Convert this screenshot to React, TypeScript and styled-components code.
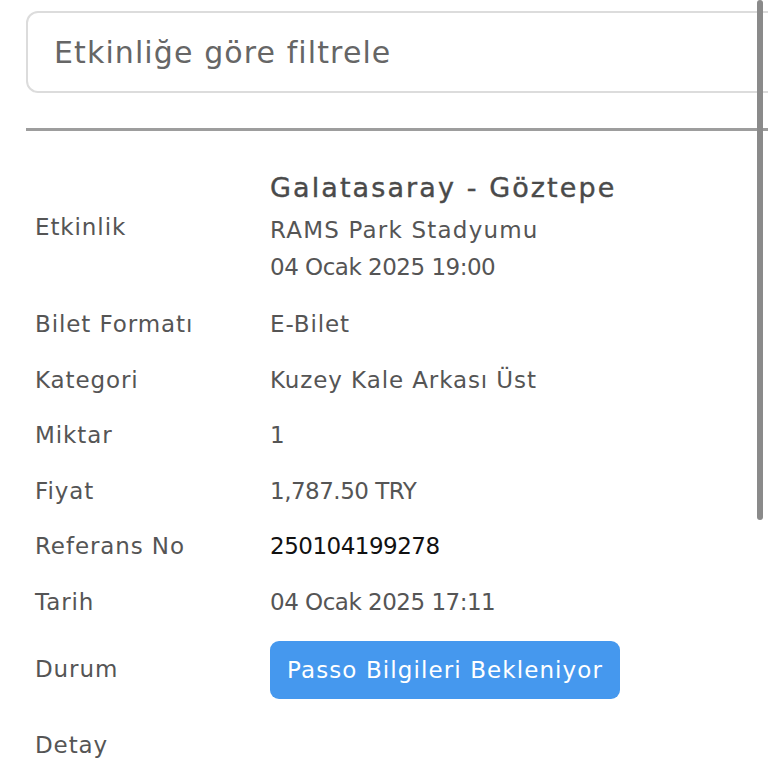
import styled, { createGlobalStyle } from 'styled-components';

const GlobalStyle = createGlobalStyle`
  html, body {
    margin: 0;
    padding: 0;
    background: #ffffff;
  }
  body {
    font-family: "DejaVu Sans", "Open Sans", sans-serif;
    overflow: hidden;
  }
`;

type Row = { label: string; value: string; strong?: boolean; numeric?: boolean };

const rows: Row[] = [
  { label: 'Bilet Formatı', value: 'E-Bilet' },
  { label: 'Kategori', value: 'Kuzey Kale Arkası Üst' },
  { label: 'Miktar', value: '1', numeric: true },
  { label: 'Fiyat', value: '1,787.50 TRY', numeric: true },
  { label: 'Referans No', value: '250104199278', strong: true, numeric: true },
  { label: 'Tarih', value: '04 Ocak 2025 17:11', numeric: true },
];

const App = () => {
  return (
    <Page>
      <GlobalStyle />
      <FilterInput placeholder="Etkinliğe göre filtrele" />
      <Divider />
      <Details>
        <tbody>
          <tr>
            <Label>Etkinlik</Label>
            <Value>
              <EventTitle>Galatasaray - Göztepe</EventTitle>
              <EventLine>RAMS Park Stadyumu</EventLine>
              <EventLine $numeric>04 Ocak 2025 19:00</EventLine>
            </Value>
          </tr>
          {rows.map((r) => (
            <tr key={r.label}>
              <Label>{r.label}</Label>
              <Value $strong={r.strong} $numeric={r.numeric}>{r.value}</Value>
            </tr>
          ))}
          <tr>
            <Label $tall>Durum</Label>
            <Value $tall>
              <StatusBadge>Passo Bilgileri Bekleniyor</StatusBadge>
            </Value>
          </tr>
          <tr>
            <Label $last>Detay</Label>
            <Value $last />
          </tr>
        </tbody>
      </Details>
      <ScrollThumb />
    </Page>
  );
};

export default App;

const Page = styled.div`
  position: relative;
  width: 768px;
  height: 768px;
  overflow: hidden;
  padding: 11px 0 0 26px;
  box-sizing: border-box;
`;

const FilterInput = styled.input`
  display: block;
  width: 780px;
  height: 82px;
  box-sizing: border-box;
  border: 2px solid #dcdcdc;
  border-radius: 12px;
  padding: 0 26px;
  font-family: "DejaVu Sans", "Open Sans", sans-serif;
  font-size: 30px;
  letter-spacing: 1.1px;
  color: #555;
  outline: none;

  &::placeholder {
    color: #666666;
  }
`;

const Divider = styled.div`
  width: 780px;
  height: 3px;
  background: #9d9d9d;
  margin-top: 35px;
`;

const Details = styled.table`
  border-collapse: collapse;
  margin-top: 27px;
  font-size: 23px;
  letter-spacing: 0.9px;
  color: #555555;
`;

const Label = styled.td<{ $tall?: boolean; $last?: boolean }>`
  width: 244px;
  padding: ${(p) => (p.$tall ? '10px' : p.$last ? '20px' : '11px')} 0 ${(p) => (p.$tall ? '10px' : '11px')} 9px;
  line-height: 33.6px;
  vertical-align: middle;
  white-space: nowrap;
  box-sizing: border-box;
`;

const Value = styled.td<{ $strong?: boolean; $numeric?: boolean; $tall?: boolean; $last?: boolean }>`
  padding: ${(p) => (p.$tall ? '10px' : p.$last ? '20px' : '11px')} 0 ${(p) => (p.$tall ? '10px' : '11px')} 0;
  line-height: 33.6px;
  vertical-align: middle;
  color: ${(p) => (p.$strong ? '#111111' : '#555555')};
  letter-spacing: ${(p) => (p.$numeric ? '-0.5px' : '0.9px')};
  white-space: nowrap;
`;

const EventTitle = styled.div`
  font-size: 27px;
  font-weight: 500;
  line-height: 36px;
  letter-spacing: 2.1px;
  margin: 1px 0 6px;
  color: #4a4a4a;
  -webkit-text-stroke: 0.4px #4a4a4a;
`;

const EventLine = styled.div<{ $numeric?: boolean }>`
  line-height: 37px;
  letter-spacing: ${(p) => (p.$numeric ? '-0.5px' : '1.2px')};
`;

const StatusBadge = styled.span`
  display: inline-block;
  background: #4598ee;
  color: #ffffff;
  border-radius: 9px;
  padding: 0 17px;
  height: 58px;
  line-height: 58px;
  font-size: 23px;
  letter-spacing: 1.1px;
`;

const ScrollThumb = styled.div`
  position: absolute;
  top: 0;
  left: 757px;
  width: 6px;
  height: 520px;
  border-radius: 3px;
  background: #8a8a8a;
`;
